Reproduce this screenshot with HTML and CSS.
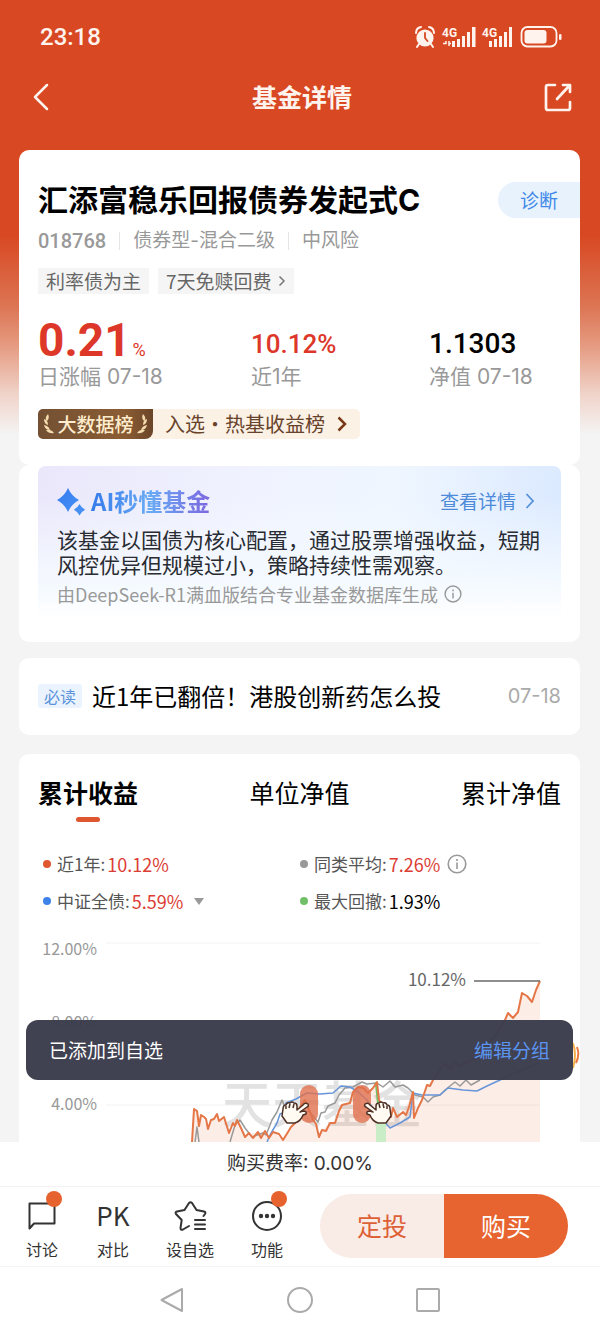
FILE: index.html
```html
<!DOCTYPE html>
<html lang="zh-CN">
<head>
<meta charset="utf-8">
<meta name="viewport" content="width=device-width, initial-scale=1">
<title>基金详情</title>
<link rel="stylesheet" href="styles.css">
</head>
<body>
<div class="app">
  <header>
    <div class="status">
      <span class="clock">23:18</span>
      <svg class="status-icons" width="148" height="24" viewBox="414 25 148 24" fill="#fff3ee" aria-hidden="true">
        <circle cx="425" cy="38" r="8.6"/>
        <path d="M416 33q0-5 5-6M434 33q0-5-5-6M419 44l-2 3M431 44l2 3" fill="none" stroke="#fff3ee" stroke-width="2" stroke-linecap="round"/>
        <path d="M425 33v5l2.500 3" fill="none" stroke="#d84822" stroke-width="1.800" stroke-linecap="round"/>
        <text class="net" x="442" y="37">4G</text>
        <text class="net" x="482" y="37">4G</text>
        <path d="M443 43.500h3v-2.500M449 41v5M451 43.500h-2" fill="none" stroke="#fff3ee" stroke-width="1.500"/>
        <path d="M452 41h3v6h-3zM457 39h3v8h-3zM462 36h3v11h-3zM467 32h3v15h-3zM472 27h3.500v20H472zM489 41h3v6h-3zM494 39h3v8h-3zM499 36h3v11h-3zM504 32h3v15h-3zM509 27h3v20h-3z"/>
        <rect x="521.500" y="27" width="35" height="19.500" rx="6" fill="none" stroke="#fff3ee" stroke-width="1.800"/>
        <rect x="524.500" y="30" width="22" height="13.500" rx="3"/>
        <rect x="559" y="34" width="2.500" height="6" rx="1.200"/>
      </svg>
    </div>
    <nav class="navbar">
      <button class="icon-btn" aria-label="返回"><svg width="30" height="30" viewBox="0 0 30 30" fill="none" stroke="#fff3ee" stroke-width="2.500" stroke-linecap="round" stroke-linejoin="round"><path d="M16 3L4 15l12 12"/></svg></button>
      <h1>基金详情</h1>
      <button class="icon-btn" aria-label="分享"><svg width="30" height="30" viewBox="0 0 30 30" fill="none" stroke="#fff3ee" stroke-width="2.700" stroke-linecap="round" stroke-linejoin="round"><path d="M12 3H5q-2 0-2 2v21q0 2 2 2h20q2 0 2-2v-6M14 17L26 4M20 3h7v7"/></svg></button>
    </nav>
  </header>

  <main>
    <section class="card summary">
      <div class="title-row">
        <h2>汇添富稳乐回报债券发起式C</h2>
        <button class="diagnose">诊断</button>
      </div>
      <div class="meta"><span class="code">018768</span><span>债券型-混合二级</span><span>中风险</span></div>
      <div class="tags">
        <span class="tag">利率债为主</span>
        <a class="tag" href="#">7天免赎回费<svg width="8" height="12" viewBox="0 0 8 12" fill="none" stroke="#777" stroke-width="1.500"><path d="M1.500 1.500L6 6l-4.500 4.500"/></svg></a>
      </div>
      <div class="stats">
        <div><div class="value big">0.21<small>%</small></div><div class="label">日涨幅 07-18</div></div>
        <div><div class="value red">10.12%</div><div class="label">近1年</div></div>
        <div><div class="value">1.1303</div><div class="label">净值 07-18</div></div>
      </div>
      <a class="rank" href="#">
        <span class="rank-badge">
          <svg width="11" height="20" viewBox="0 0 11 20" fill="#f5dcae"><path d="M4 0q-4 4-1 7Q6 4 4 0zM0 5q0 5 4 6Q4 6 0 5zM0 11q1 5 6 5-1-4-6-5zM2 16q3 4 8 3-3-4-8-3z"/></svg>大数据榜<svg width="11" height="20" viewBox="0 0 11 20" fill="#f5dcae"><path d="M7 0q4 4 1 7Q5 4 7 0zM11 5q0 5-4 6Q7 6 11 5zM11 11q-1 5-6 5 1-4 6-5zM9 16q-3 4-8 3 3-4 8-3z"/></svg>
        </span>
        <span class="rank-text">入选·热基收益榜</span>
        <svg width="10" height="16" viewBox="0 0 10 16" fill="none" stroke="#773a15" stroke-width="2.500"><path d="M1.500 1.500L8 8l-6.500 6.500"/></svg>
      </a>
    </section>

    <section class="card ai-card">
      <div class="ai">
        <div class="ai-head">
          <svg width="30" height="28" viewBox="0 0 30 28" aria-hidden="true"><defs><linearGradient id="spark" x2="1" y2="1"><stop stop-color="#357cf0"/><stop offset="1" stop-color="#4b94f4"/></linearGradient></defs><path fill="url(#spark)" d="M11 1q3.500 8 11 12Q14.500 17 11 25 7.500 17 0 13 7.500 9 11 1zM22.500 17q2 4 5.800 5.800-3.800 1.700-5.800 5.700-2-4-5.800-5.700 3.800-1.800 5.800-5.800z"/></svg>
          <h3>AI秒懂基金</h3>
          <a href="#">查看详情<svg width="10" height="16" viewBox="0 0 10 16" fill="none" stroke="#5590dd" stroke-width="1.800"><path d="M1.500 1L8 8l-6.500 7"/></svg></a>
        </div>
        <p>该基金以国债为核心配置，通过股票增强收益，短期风控优异但规模过小，策略持续性需观察。</p>
        <div class="source">由DeepSeek-R1满血版结合专业基金数据库生成<svg width="18" height="18" viewBox="0 0 20 20" fill="none" stroke="#999" stroke-width="1.600"><circle cx="10" cy="10" r="8.800"/><path d="M10 8.500V15M10 5v2"/></svg></div>
      </div>
    </section>

    <a class="card note" href="#">
      <span class="must">必读</span>
      <span class="note-title">近1年已翻倍！港股创新药怎么投</span>
      <time>07-18</time>
    </a>

    <section class="card chart-card">
      <div class="tabs" role="tablist">
        <button class="active" role="tab" aria-selected="true">累计收益</button>
        <button role="tab" aria-selected="false">单位净值</button>
        <button role="tab" aria-selected="false">累计净值</button>
      </div>
      <div class="legend">
        <div class="orange">近1年:<b>10.12%</b></div>
        <div class="grey">同类平均:<b>7.26%</b><svg width="20" height="20" viewBox="0 0 20 20" fill="none" stroke="#999" stroke-width="1.600"><circle cx="10" cy="10" r="8.800"/><path d="M10 8.500V15M10 5v2"/></svg></div>
        <div class="blue">中证全债:<b>5.59%</b><svg class="caret" width="10" height="7" viewBox="0 0 10 7" fill="#999"><path d="M0 0h10L5 7z"/></svg></div>
        <div class="green">最大回撤:<b class="black">1.93%</b></div>
      </div>
      <svg class="chart" viewBox="19 930 561 212" role="img" aria-label="累计收益走势">
        <path d="M106 943H540M106 1021H540M106 1105H540" stroke="#f2f2f2"/>
        <text class="watermark" x="222" y="1123">天天基金</text>
        <path fill="#ee6b3b" fill-opacity=".12" d="M192 1142L194 1109 197 1111 199 1126 201 1115 208 1129 211 1120 217 1114 219 1121 224 1117 229 1133 237 1122 245 1137 253 1133 263 1132 268 1137 273 1132 283 1140 288 1132 295 1123 300 1107 305 1100 313 1120 319 1137 322 1130 330 1123 335 1123 342 1105 350 1103 353 1092 358 1087 368 1093 377 1082 379 1100 392 1117 403 1112 413 1092 414 1118 420 1103 427 1085 433 1080 445 1063 460 1066 475 1058 487 1045 496 1035 505 1020 508 1013 513 1018 518 1012 522 993 527 996 532 1002 536 990 540 981V1142z"/>
        <path class="line" stroke="#999" d="M195 1142L197 1127 199 1142M230 1142L235 1125 240 1120 245 1128 252 1137 263 1133 266 1135 272 1120 277 1112 282 1100 285 1107 292 1111 300 1115 309 1111 318 1122 321 1113 325 1112 328 1106 335 1103 339 1095 345 1088 353 1087 362 1082 367 1084 377 1083 383 1087 390 1081 395 1087 403 1085 408 1088 412 1092 415 1095 423 1097 428 1102 433 1097 440 1095 445 1090 455 1082 460 1086 466 1080 471 1085 480 1080"/>
        <path class="line" stroke="#6795d9" d="M267 1142L270 1135 277 1123 280 1114 283 1113 286 1103 296 1099 307 1093 320 1094 333 1093 341 1086 350 1087 358 1092 367 1100 380 1117 390 1128 400 1123 410 1117 413 1093 422 1095 440 1095 448 1088 463 1090 477 1091 487 1086 500 1080 515 1073 540 1063"/>
        <path d="M376 1082l4 38" stroke="#72c267" stroke-width="2.500"/>
        <path d="M376 1120h10v22h-10z" fill="#c9edc6"/>
        <path class="line main-line" d="M192 1142L194 1109 197 1111 199 1126 201 1115 204 1117 206 1119 208 1129 211 1120 214 1119 217 1114 219 1121 224 1117 229 1133 233 1123 235 1126 237 1120 241 1128 245 1137 249 1133 253 1138 258 1132 261 1138 265 1131 269 1138 273 1132 279 1134 283 1140 288 1132 291 1127 295 1123 300 1107 305 1100 310 1112 313 1120 316 1124 319 1137 322 1130 326 1131 330 1123 335 1123 339 1111 342 1105 350 1103 353 1092 358 1087 363 1088 368 1093 373 1088 377 1082 379 1100 388 1112 391 1117 393 1108 397 1117 403 1112 406 1115 409 1107 413 1092 414 1118 418 1108 422 1100 427 1085 430 1086 433 1080 445 1063 450 1069 455 1062 460 1066 475 1058 487 1045 496 1035 505 1020 508 1013 513 1018 518 1012 522 993 527 996 532 1002 536 990 540 981"/>
        <rect x="300" y="1085" width="18" height="38" rx="9" fill="#e0714f" fill-opacity=".8"/>
        <rect x="353" y="1085" width="18" height="38" rx="9" fill="#e0714f" fill-opacity=".8"/>
        <g class="hand"><path d="M365 1104q3-2 5 1l6 5v-4q0-3 3-3 2-2 4 0 3-1 4 2 3 0 3 4l1 7-5 7h-8q-6-2-8-8l-3-1q-1-3 3-3l3 1-7-5q-2-1-1-3z"/><path d="M379 1104l1 4M383 1104l1 4M387 1106v3"/></g>
        <g class="hand"><path d="M308 1104q-3-2-5 1l-6 5v-4q0-3-3-3-2-2-4 0-3-1-4 2-3 0-3 4l-1 7 5 7h8q6-2 8-8l3-1q1-3-3-3l-3 1 7-5q2-1 1-3z"/><path d="M294 1104l-1 4M290 1104l-1 4M286 1106v3"/></g>
        <text class="axis" x="97" y="955">12.00%</text>
        <text class="axis" x="97" y="1028">8.00%</text>
        <text class="axis" x="97" y="1110">4.00%</text>
        <text class="peak" x="466" y="986">10.12%</text>
        <path d="M474 981H540" stroke="#686868" stroke-width="1.500"/>
        <g fill="none" stroke-width="2"><path stroke="#f4b04a" d="M573 1043q4 12 0 25"/><path stroke="#ec7a3f" d="M577 1047q3 8-1 16"/></g>
      </svg>
      <div class="toast" role="status"><span>已添加到自选</span><a href="#">编辑分组</a></div>
    </section>
  </main>

  <footer>
    <div class="fee">购买费率: 0.00%</div>
    <div class="actions">
      <div class="tools">
        <button><svg width="36" height="36" viewBox="0 0 36 36"><path d="M5.500 6.500h25v20H10l-4.500 5z"/><circle class="dot" cx="30" cy="2" r="8"/></svg>讨论</button>
        <button><span class="pk">PK</span>对比</button>
        <button><svg width="36" height="36" viewBox="0 0 36 36"><path d="M17 29l-6 3.500q-2.500 1-2.500-1.500l1.200-8-5.700-6q-1.200-2 1-2.500l7.500-1.500 4.500-7q1.500-1.500 3 0l4.500 7 7.500 1.500q2.200.5 1 2.500l-1.500 2M23 23h10M23 27.500h10M23 32h10"/></svg>设自选</button>
        <button><svg width="36" height="36" viewBox="0 0 36 36"><circle cx="18" cy="19" r="14"/><g class="ellipsis"><circle cx="12" cy="19" r="2.200"/><circle cx="18" cy="19" r="2.200"/><circle cx="24" cy="19" r="2.200"/></g><circle class="dot" cx="30" cy="2" r="8"/></svg>功能</button>
      </div>
      <div class="trade"><button class="plan">定投</button><button class="buy">购买</button></div>
    </div>
    <nav class="system" aria-label="系统导航">
      <button aria-label="返回"><svg width="28" height="28" viewBox="0 0 28 28"><path d="M3.500 14L24 3v22z"/></svg></button>
      <button aria-label="主页"><svg width="28" height="28" viewBox="0 0 28 28"><circle cx="14" cy="14" r="12"/></svg></button>
      <button aria-label="最近任务"><svg width="28" height="28" viewBox="0 0 28 28"><rect x="3" y="3" width="22" height="22" rx="1"/></svg></button>
    </nav>
  </footer>
</div>
</body>
</html>
```

FILE: styles.css
```css
* { box-sizing: border-box; }
body {
  margin: 0;
  background: #f4f4f4;
  color: #000;
  font-family: "Noto Sans CJK SC", sans-serif;
}
h1, h2, h3, p { margin: 0; }
a { color: inherit; text-decoration: none; }
button { padding: 0; border: 0; background: none; color: inherit; font: inherit; }
svg { flex: none; overflow: visible; }
.app {
  display: flex;
  flex-direction: column;
  min-height: 100vh;
  background: linear-gradient(#d84822 0, #d84822 235px, #dc7452 305px, #e59a80 345px, #f0d4ca 395px, #f4f4f4 435px);
}
.status { display: flex; align-items: center; justify-content: space-between; height: 74px; padding: 0 38px 0 40px; color: #fff3ee; }
.clock { font: 500 24px/28px Roboto, sans-serif; }
.net { font: 700 12px Roboto, sans-serif; }
.navbar { display: flex; align-items: center; justify-content: space-between; height: 46px; padding: 0 27px 0 31px; color: #fff3ee; }
.icon-btn { width: 30px; height: 30px; }
.icon-btn svg { display: block; }
.navbar h1 { padding-bottom: 2px; font-size: 25px; line-height: 36px; }
main { flex: 1; display: flex; flex-direction: column; padding: 30px 20px 0 19px; }
.card { background: #fff; border-radius: 10px; }

.summary { padding: 30px 0 26px 19px; }
.title-row { display: flex; align-items: center; justify-content: space-between; }
h2 { font-family: Inter, "Noto Sans CJK SC", sans-serif; font-size: 30px; line-height: 40px; white-space: nowrap; }
.diagnose { width: 82px; height: 36px; border-radius: 18px 0 0 18px; background: #e8f2fd; color: #4089e9; font-size: 19px; line-height: 28px; }
.meta { display: flex; align-items: center; margin-top: 8px; color: #999; font-family: Inter, "Noto Sans CJK SC", sans-serif; font-size: 19px; line-height: 26px; }
.meta span + span { display: flex; align-items: center; }
.meta span + span::before { content: ""; width: 1px; height: 18px; margin: 0 13px; background: #e5e5e5; }
.meta .code { font-family: Roboto, sans-serif; font-size: 20px; font-weight: 500; }
.tags { display: flex; gap: 9px; margin-top: 14px; }
.tag { display: flex; align-items: center; gap: 6px; padding: 0 8px; background: #f5f5f5; color: #666; font-size: 19px; line-height: 26px; }
.stats { display: grid; grid-template-columns: 213px 178px 1fr; align-items: end; margin-top: 22px; }
.value { margin-bottom: 4px; font: 500 28px/32px Roboto, sans-serif; }
.value.red, .value.big { color: #dc3729; }
.value.red { font-size: 26px; }
.value.big { margin-bottom: 0; font-size: 46px; font-weight: 700; line-height: 48px; }
.value small { margin-left: 2px; font-size: 18px; font-weight: 400; line-height: 1; }
.label { color: #999; font-family: Inter, "Noto Sans CJK SC", sans-serif; font-size: 21px; line-height: 26px; }
.rank { display: inline-flex; align-items: center; height: 30px; margin-top: 19px; padding-right: 13px; border-radius: 5px; background: #fcf1e5; color: #68432b; }
.rank-badge { display: flex; align-items: center; justify-content: center; gap: 2px; width: 115px; height: 30px; border-radius: 5px 0 8px 5px; background: linear-gradient(90deg, #735033, #8b5d34 75%, #6b4529); color: #ffedcd; font-size: 19px; font-weight: 500; line-height: 28px; }
.rank-text { margin: 0 12px; font-size: 20px; line-height: 28px; }

.ai-card { padding: 1px 19px 23px; }
.ai { padding: 20px 19px 12px; border-radius: 8px 8px 0 0; background: linear-gradient(transparent 20%, #f5faff 80%, #fff), linear-gradient(100deg, #eae7fa, #f0f3ff 40%, #eff6ff 65%, #d9e8ff); }
.ai-head { display: flex; align-items: center; }
.ai-head h3 { margin-left: 4px; background: linear-gradient(90deg, #357bea, #69aaf4 50%, #7c67df); background-clip: text; color: transparent; font-size: 24px; line-height: 30px; }
.ai-head a { display: flex; align-items: center; gap: 9px; margin-left: auto; padding-right: 7px; color: #4d8bda; font-size: 19px; line-height: 28px; }
.ai p { margin-top: 11px; color: #292c32; font-size: 21px; line-height: 25px; }
.source { display: flex; align-items: center; gap: 6px; margin-top: 4px; color: #999; font-size: 18px; line-height: 26px; }

.note { display: flex; align-items: center; gap: 10px; margin-top: 16px; padding: 18px 19px 20px; }
.must { padding: 0 6px; border-radius: 3px; background: #eaf3fe; color: #5b94da; font-size: 16px; line-height: 24px; }
.note-title { font-size: 24px; line-height: 39px; }
.note time { margin-left: auto; color: #aaa; font-family: Inter, sans-serif; font-size: 20px; }

.chart-card { position: relative; margin-top: 19px; padding-top: 20px; border-radius: 10px 10px 0 0; }
.tabs { display: flex; justify-content: space-between; padding: 0 19px; font-size: 25px; line-height: 36px; }
.tabs button { display: flex; flex-direction: column; align-items: center; gap: 7px; }
.tabs .active { font-weight: 700; }
.tabs .active::after { content: ""; width: 24px; height: 5px; border-radius: 3px; background: #df5731; }
.legend { display: grid; grid-template-columns: 257px 1fr; row-gap: 11px; margin-top: 29px; padding-left: 24px; color: #555; font-size: 17px; line-height: 26px; }
.legend div { display: flex; align-items: center; }
.legend div::before { content: ""; width: 8px; height: 8px; margin-right: 6px; border-radius: 50%; background: currentColor; }
.legend .orange::before { background: #df5731; }
.legend .grey::before { background: #999; }
.legend .blue::before { background: #3c82e8; }
.legend .green::before { background: #71bf68; }
.legend b { margin-left: 2px; color: #dc3d33; font-size: 18px; font-weight: 400; }
.legend .black { color: #000; }
.legend svg { margin-left: 7px; }
.legend .caret { margin-left: 11px; }
.chart { display: block; width: 100%; margin-top: 16px; overflow: hidden; }
.chart text { font-family: "Noto Sans CJK SC", sans-serif; }
.watermark { fill: #e2e2e2; font-size: 50px; font-weight: 500; }
.axis { fill: #999; font-size: 16px; text-anchor: end; }
.peak { fill: #666; font-size: 17px; text-anchor: end; }
.line { fill: none; stroke-width: 1.5px; stroke-linejoin: round; }
.main-line { stroke: #e47648; stroke-width: 2px; }
.hand { fill: #fffaf2; stroke: #4d3024; stroke-width: 1.5px; stroke-linejoin: round; }
.toast { position: absolute; right: 7px; bottom: 62px; left: 7px; display: flex; align-items: center; justify-content: space-between; height: 60px; padding: 0 23px 2px; border-radius: 12px; background: rgba(60, 61, 78, 0.98); color: #fff; font-size: 19px; }
.toast a { color: #5b94ef; }

footer { background: #fff; color: #333; }
.fee { padding: 9px 0; font-family: Inter, "Noto Sans CJK SC", sans-serif; font-size: 19px; line-height: 26px; text-align: center; border-bottom: 1px solid #f2f2f2; }
.actions { display: flex; align-items: flex-start; justify-content: space-between; padding: 7px 32px 5px 24px; border-bottom: 1px solid #f5f5f5; }
.tools { display: flex; gap: 35px; padding-top: 3px; }
.tools button { display: flex; flex-direction: column; align-items: center; gap: 4px; min-width: 36px; font-size: 16px; line-height: 24px; }
.tools svg { fill: none; stroke: #333; stroke-width: 2px; stroke-linecap: round; stroke-linejoin: round; }
.tools .dot { fill: #e66330; stroke: none; }
.tools .ellipsis { fill: #333; stroke: none; }
.pk { font-size: 26px; line-height: 36px; }
.trade { display: grid; grid-template-columns: 1fr 1fr; width: 248px; height: 64px; overflow: hidden; border-radius: 32px; font-size: 25px; line-height: 36px; }
.trade button { padding-bottom: 3px; }
.plan { background: #f9ebe6; color: #dd6036; }
.buy { background: #e76430; color: #fff; }
.system { display: flex; align-items: center; justify-content: center; gap: 100px; height: 65px; }
.system svg { display: block; fill: none; stroke: #aaa; stroke-width: 2px; stroke-linejoin: round; }
```
